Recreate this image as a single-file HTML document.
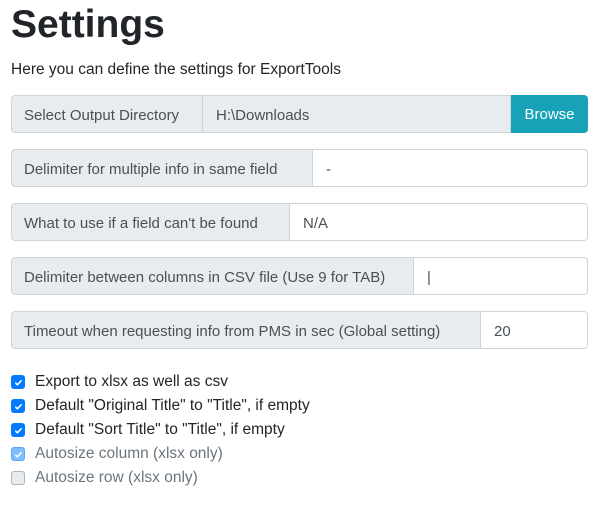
<!DOCTYPE html>
<html><head><meta charset="utf-8"><style>
*{box-sizing:border-box}
body{margin:0;width:597px;height:509px;background:#fff;font-family:"Liberation Sans",sans-serif;color:#212529;overflow:hidden}
h1{position:absolute;left:11px;top:3px;margin:0;font-size:39px;font-weight:bold;letter-spacing:0;color:#212529}
.sub{position:absolute;left:11px;top:61px;font-size:15.5px}
.ig{position:absolute;left:11px;width:577px;height:38px;display:flex;font-size:15px}
.lab{background:#e9ecef;border:1px solid #ced4da;border-radius:4px 0 0 4px;display:flex;align-items:center;padding-left:12px;padding-top:2px;color:#495057;white-space:nowrap;overflow:hidden;flex:none}
.inp{flex:1;border:1px solid #ced4da;border-left:none;border-radius:0 4px 4px 0;display:flex;align-items:center;padding-left:13px;padding-top:2px;color:#495057;background:#fff}
.ro{background:#e9ecef;border-radius:0}
.btn{width:77px;background:#17a2b8;color:#fff;border-radius:0 4px 4px 0;display:flex;align-items:center;justify-content:center;flex:none;padding-top:1px}
.cb{position:absolute;left:11px;font-size:15.5px;display:flex;align-items:center;height:24px}
.box{width:14px;height:14px;border-radius:3px;background:#007bff;margin-right:10px;display:flex;align-items:center;justify-content:center}
.box svg{width:9px;height:9px}
.dis{color:#6c757d}
</style></head><body>
<h1>Settings</h1>
<div class="sub">Here you can define the settings for ExportTools</div>

<div class="ig" style="top:95px"><div class="lab" style="width:192px">Select Output Directory</div><div class="inp ro">H:\Downloads</div><div class="btn">Browse</div></div>
<div class="ig" style="top:149px"><div class="lab" style="width:302px">Delimiter for multiple info in same field</div><div class="inp">-</div></div>
<div class="ig" style="top:203px"><div class="lab" style="width:279px">What to use if a field can't be found</div><div class="inp">N/A</div></div>
<div class="ig" style="top:257px"><div class="lab" style="width:403px">Delimiter between columns in CSV file (Use 9 for TAB)</div><div class="inp">|</div></div>
<div class="ig" style="top:311px"><div class="lab" style="width:470px">Timeout when requesting info from PMS in sec (Global setting)</div><div class="inp">20</div></div>

<div class="cb" style="top:370px"><div class="box"><svg viewBox="0 0 8 8"><path d="M1.2 4.2 3 6 6.8 2" stroke="#fff" stroke-width="1.4" fill="none"/></svg></div>Export to xlsx as well as csv</div>
<div class="cb" style="top:394px"><div class="box"><svg viewBox="0 0 8 8"><path d="M1.2 4.2 3 6 6.8 2" stroke="#fff" stroke-width="1.4" fill="none"/></svg></div>Default "Original Title" to "Title", if empty</div>
<div class="cb" style="top:418px"><div class="box"><svg viewBox="0 0 8 8"><path d="M1.2 4.2 3 6 6.8 2" stroke="#fff" stroke-width="1.4" fill="none"/></svg></div>Default "Sort Title" to "Title", if empty</div>
<div class="cb dis" style="top:442px"><div class="box" style="background:#80bdff;border:1px solid #5ea8f5"><svg viewBox="0 0 8 8"><path d="M1.2 4.2 3 6 6.8 2" stroke="#fff" stroke-width="1.4" fill="none"/></svg></div>Autosize column (xlsx only)</div>
<div class="cb dis" style="top:466px"><div class="box" style="background:#e9ecef;border:1px solid #adb5bd"></div>Autosize row (xlsx only)</div>
</body></html>
